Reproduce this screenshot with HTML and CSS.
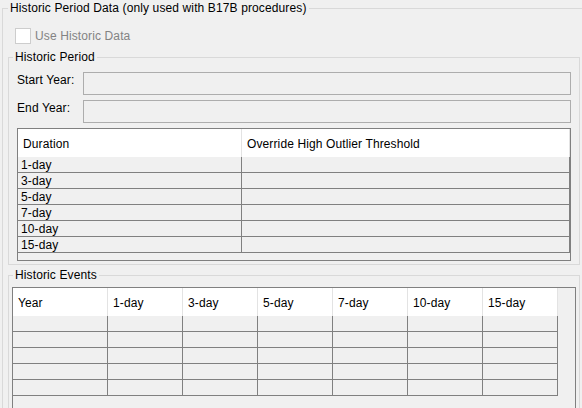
FILE: index.html
```html
<!DOCTYPE html>
<html>
<head>
<meta charset="utf-8">
<link rel="stylesheet" href="styles.css">
</head>
<body>
<fieldset class="panel">
  <legend class="title">Historic Period Data (only used with B17B procedures)</legend>
  <div class="check"><span class="box"></span><span class="check-text">Use Historic Data</span></div>

  <fieldset class="group period">
    <legend class="title period-title">Historic Period</legend>
    <div class="field-row"><span class="field-label">Start Year:</span><span class="field"></span></div>
    <div class="field-row"><span class="field-label">End Year:</span><span class="field"></span></div>
    <div class="table dur-table">
      <div class="thead">
        <div class="th w-dur">Duration</div>
        <div class="th w-ovr">Override High Outlier Threshold</div>
      </div>
      <div class="trow"><div class="td w-dur">1-day</div><div class="td w-ovr"></div></div>
      <div class="trow"><div class="td w-dur">3-day</div><div class="td w-ovr"></div></div>
      <div class="trow"><div class="td w-dur">5-day</div><div class="td w-ovr"></div></div>
      <div class="trow"><div class="td w-dur">7-day</div><div class="td w-ovr"></div></div>
      <div class="trow"><div class="td w-dur">10-day</div><div class="td w-ovr"></div></div>
      <div class="trow"><div class="td w-dur">15-day</div><div class="td w-ovr"></div></div>
    </div>
  </fieldset>

  <fieldset class="group events">
    <legend class="title events-title">Historic Events</legend>
    <div class="table ev-table">
      <div class="thead">
        <div class="th w-year">Year</div>
        <div class="th w-day">1-day</div>
        <div class="th w-day">3-day</div>
        <div class="th w-day">5-day</div>
        <div class="th w-day">7-day</div>
        <div class="th w-day">10-day</div>
        <div class="th w-day">15-day</div>
      </div>
      <div class="trow"><div class="td w-year"></div><div class="td w-day"></div><div class="td w-day"></div><div class="td w-day"></div><div class="td w-day"></div><div class="td w-day"></div><div class="td w-day"></div></div>
      <div class="trow"><div class="td w-year"></div><div class="td w-day"></div><div class="td w-day"></div><div class="td w-day"></div><div class="td w-day"></div><div class="td w-day"></div><div class="td w-day"></div></div>
      <div class="trow"><div class="td w-year"></div><div class="td w-day"></div><div class="td w-day"></div><div class="td w-day"></div><div class="td w-day"></div><div class="td w-day"></div><div class="td w-day"></div></div>
      <div class="trow"><div class="td w-year"></div><div class="td w-day"></div><div class="td w-day"></div><div class="td w-day"></div><div class="td w-day"></div><div class="td w-day"></div><div class="td w-day"></div></div>
      <div class="trow"><div class="td w-year"></div><div class="td w-day"></div><div class="td w-day"></div><div class="td w-day"></div><div class="td w-day"></div><div class="td w-day"></div><div class="td w-day"></div></div>
    </div>
  </fieldset>
</fieldset>
</body>
</html>
```

FILE: styles.css
```css
* { box-sizing: border-box; }

html, body {
  margin: 0;
  padding: 0;
}

body {
  width: 582px;
  height: 408px;
  overflow: hidden;
  padding-top: 1px;
  background: #f0f0f0;
  font-family: "Liberation Sans", Arial, sans-serif;
  font-size: 12px;
  letter-spacing: 0.12px;
  color: #000;
}

fieldset {
  margin: 0;
  min-width: 0;
}

.title {
  padding: 0 2px;
  line-height: 15px;
  font-size: 12px;
}

.panel {
  margin-left: 2px;
  width: 600px;
  border: 1px solid #d9d9d9;
  padding: 12px 0 0 5px;
}

.check {
  display: flex;
  align-items: center;
  gap: 4px;
  margin-left: 7px;
  height: 16px;
  line-height: 16px;
  color: #838383;
}

.box {
  width: 16px;
  height: 16px;
  border: 1px solid #cdcdcd;
  background: #fff;
}

.group {
  width: 572px;
  border: 1px solid #d9d9d9;
}

.period {
  margin-top: 6px;
  padding: 7px 8px 3px 8px;
}

.period-title { margin-left: -4px; }

.events {
  margin-top: 3px;
  padding: 4px 3px 0 3px;
}

.events-title { margin-left: 1px; }

.field-row {
  display: flex;
  height: 23px;
  margin-bottom: 5px;
}

.field-label {
  width: 66px;
  line-height: 17px;
}

.field {
  flex: 1;
  border: 1px solid #adadad;
  background: #f0f0f0;
}

.table {
  border: 1px solid #808080;
  background: #f0f0f0;
}

.dur-table { height: 133px; }
.ev-table { height: 124px; }

.thead, .trow { display: flex; }

.th {
  height: 28px;
  padding: 3px 0 0 5px;
  line-height: 25px;
  background: #fff;
  border-right: 1px solid #e3e3e3;
  white-space: nowrap;
}

.td {
  height: 16px;
  line-height: 17px;
  padding-left: 3px;
  border-right: 1px solid #808080;
  border-bottom: 1px solid #808080;
  white-space: nowrap;
}

.w-dur { width: 224px; }
.w-ovr { width: 328px; }
.w-year { width: 95px; }
.w-day { width: 75px; }
```
